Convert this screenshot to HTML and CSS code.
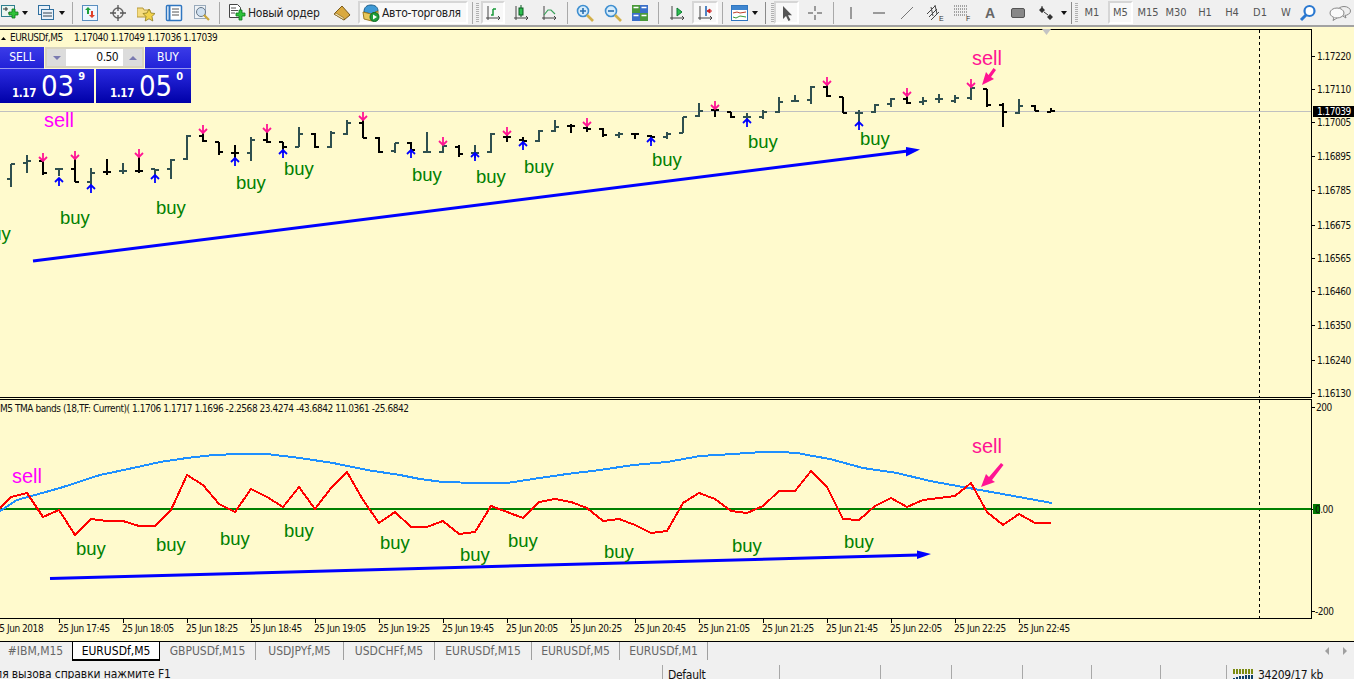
FILE: index.html
```
<!DOCTYPE html>
<html lang="ru">
<head>
<meta charset="utf-8">
<title>MetaTrader EURUSDf,M5</title>
<link rel="stylesheet" href="styles.css">
</head>
<body>
<div class="app">
  <header class="toolbar">
    <div class="tb w20"><svg class="ic" viewBox="0 0 18 18"><rect x=".5" y="1.5" width="13" height="11" fill="#eaf6f0" stroke="#2f7f8f"/><path d="M2 5h5M5 3v4M7 9h4" stroke="#333" fill="none"/><path class="plus" d="M8 8h3V5h3v3h3v3h-3v3h-3v-3H8z"/></svg></div>
    <div class="tb w10"><i class="caret"></i></div>
    <div class="sp6"></div>
    <div class="tb w20"><svg class="ic" viewBox="0 0 18 18"><rect x="1.5" y="1.5" width="11" height="9" fill="#e8f0f8" stroke="#2f6f9f"/><rect x="4.5" y="5.5" width="12" height="10" fill="#e8f0f8" stroke="#2f6f9f"/><path d="M6 9h9M6 12h9" stroke="#345" fill="none"/></svg></div>
    <div class="tb w12"><i class="caret"></i></div>
    <div class="sepbox w8"><i class="sep"></i></div>
    <div class="tb w28"><svg class="ic" viewBox="0 0 18 18"><rect x="1.5" y="1.5" width="15" height="15" fill="#eef6ff" stroke="#5a8fc0"/><path d="M7 3l3 3H8v4H6V6H4z" fill="#1fa03a"/><path d="M11 14l-3-3h2V7h2v4h2z" fill="#e0402a"/></svg></div>
    <div class="tb w28"><svg class="ic" viewBox="0 0 18 18"><circle cx="9" cy="9" r="5" fill="none" stroke="#666" stroke-width="1.4"/><path d="M9 1v6M9 11v6M1 9h6M11 9h6" stroke="#555" fill="none" stroke-width="1.3"/></svg></div>
    <div class="tb w28"><svg class="ic" viewBox="0 0 18 18"><path d="M0 4h6l1 2h6v7H0z" fill="#f5dc80" stroke="#b89a3a"/><path d="M12 5l2 4 4 .5-3 3 .8 4.500-3.800-2.200-3.800 2.200.8-4.500-3-3 4-.5z" fill="#f2d24a" stroke="#8a7a20" stroke-width=".8"/></svg></div>
    <div class="tb w28"><svg class="ic" viewBox="0 0 18 18"><rect x="1.500" y="1.500" width="15" height="15" rx="1" fill="#fff" stroke="#2f76c0" stroke-width="1.500"/><path d="M4.500 2v14" stroke="#2f76c0" stroke-width="2"/><path d="M7 5h7M7 8h7M7 11h7" stroke="#555" fill="none"/></svg></div>
    <div class="tb w28"><svg class="ic" viewBox="0 0 18 18"><rect x="1.500" y="1.500" width="11" height="13" fill="#eef2f6" stroke="#9ab"/><circle cx="8" cy="8" r="4.500" fill="#cfe0f0" stroke="#678"/><path d="M11 11l5 5" stroke="#c9a63a" stroke-width="2.200"/></svg></div>
    <div class="sepbox w6"><i class="sep"></i></div>
    <div class="tb order"><svg class="ic" viewBox="0 0 18 18"><path d="M1.500.5h8l3 3v10h-11z" fill="#fff" stroke="#444"/><path d="M3 4h5M3 6.500h7M3 9h4" stroke="#555" fill="none"/><path class="plus" d="M8 9h3V6h3v3h3v3h-3v4h-3v-4H8z"/></svg><span class="tb-label">Новый ордер</span></div>
    <div class="tb w24"><svg class="ic" viewBox="0 0 18 18"><path d="M1 10L9 2l8 9-6 5z" fill="#d9a93f" stroke="#7a5a1a"/><path d="M1 10l10 6v-2L3 9z" fill="#f4e3b0" stroke="#7a5a1a" stroke-width=".6"/></svg></div>
    <div class="sp4"></div>
    <div class="tb auto pressed"><svg class="ic" viewBox="0 0 18 18"><path d="M2 8c0-5 3-7 7-7s7 2 7 6l-7 3z" fill="#3f9ad6" stroke="#1c5e8a"/><path d="M1 8l8 2 7-3v7l-6 3-8-2z" fill="#e8c85a" stroke="#9a7a20"/><circle cx="12.500" cy="13" r="4.500" fill="#1f9d3a" stroke="#0f6a22"/><path d="M11 10.500l4 2.500-4 2.500z" fill="#fff"/></svg><span class="tb-label">Авто-торговля</span></div>
    <div class="sp2"></div>
    <div class="sepbox w5"><i class="sep"></i></div>
    <div class="gripbox w5"><i class="grip"></i></div>
    <div class="sp1"></div>
    <div class="tb w24 pressed"><svg class="ic16" viewBox="0 0 16 16"><path d="M3 1v12h12M1 13h2M3 13v2M13 11l2 2-2 2" class="axis"/><path d="M8 4h3M8 4v6H6" stroke="#1a9a3a" stroke-width="1.500" fill="none"/></svg></div>
    <div class="sp2"></div>
    <div class="tb w28"><svg class="ic16" viewBox="0 0 16 16"><path d="M3 1v12h12M1 13h2M3 13v2M13 11l2 2-2 2" class="axis"/><rect x="6" y="3" width="4" height="7" fill="#2fc050" stroke="#0a5a20"/><path d="M8 0v3M8 10v2" stroke="#0a5a20" fill="none"/></svg></div>
    <div class="tb w28"><svg class="ic16" viewBox="0 0 16 16"><path d="M3 1v12h12M1 13h2M3 13v2M13 11l2 2-2 2" class="axis"/><path d="M3 10l4-5 3 0 4 4" stroke="#3aa05a" stroke-width="1.200" fill="none"/></svg></div>
    <div class="sepbox w8"><i class="sep"></i></div>
    <div class="tb w28"><svg class="ic" viewBox="0 0 18 18"><circle cx="7" cy="7" r="5.500" fill="#d6ecfb" stroke="#3f8fd0" stroke-width="1.600"/><path d="M4 7h6M7 4v6" stroke="#2a70b0" stroke-width="1.600" fill="none"/><path d="M11 11l6 6" stroke="#d2b04a" stroke-width="2.600"/></svg></div>
    <div class="tb w28"><svg class="ic" viewBox="0 0 18 18"><circle cx="7" cy="7" r="5.500" fill="#d6ecfb" stroke="#3f8fd0" stroke-width="1.600"/><path d="M4 7h6" stroke="#2a70b0" stroke-width="1.600" fill="none"/><path d="M11 11l6 6" stroke="#d2b04a" stroke-width="2.600"/></svg></div>
    <div class="tb w26"><svg class="ic" viewBox="0 0 18 18"><rect x="1" y="1" width="8" height="8" fill="#4a9a3a"/><rect x="9" y="1" width="8" height="8" fill="#3a6fc8"/><rect x="1" y="9" width="8" height="8" fill="#3a6fc8"/><rect x="9" y="9" width="8" height="8" fill="#4a9a3a"/><path d="M2.500 3.500h5M10.500 3.500h5M2.500 11.500h5M10.500 11.500h5" stroke="#fff" fill="none" stroke-width="1.500"/></svg></div>
    <div class="sepbox w10"><i class="sep"></i></div>
    <div class="tb w28"><svg class="ic16" viewBox="0 0 16 16"><path d="M3 1v12h12M1 13h2M3 13v2M13 11l2 2-2 2" class="axis"/><path d="M8 3l5 4-5 4z" fill="#2fc050" stroke="#0a7a30"/></svg></div>
    <div class="sp1"></div>
    <div class="tb w26 pressed"><svg class="ic16" viewBox="0 0 16 16"><path d="M3 1v12h12M1 13h2M3 13v2M13 11l2 2-2 2" class="axis"/><path d="M9 1v10" stroke="#1a5fb0" stroke-width="1.500" fill="none"/><path d="M15 6h-3M10 6l3-2v4z" fill="#d02020" stroke="#d02020"/></svg></div>
    <div class="sepbox w8"><i class="sep"></i></div>
    <div class="sp4"></div>
    <div class="tb w20"><svg class="ic" viewBox="0 0 18 18"><rect x=".5" y="1.500" width="16" height="15" fill="#fff" stroke="#2f76c0"/><rect x="1" y="2" width="15" height="4" fill="#3f86d0"/><path d="M2 9l4-1 3 1 6-1" stroke="#c0402a" fill="none"/><path d="M2 13l3 1 4-2 6 1" stroke="#3a9a3a" fill="none"/></svg></div>
    <div class="tb w10"><i class="caret"></i></div>
    <div class="sepbox w10"><i class="sep dark"></i></div>
    <div class="gripbox w4"><i class="grip"></i></div>
    <div class="tb w25 pressed"><svg class="ic16" viewBox="0 0 16 16"><path d="M4 1v13l3-3 2.500 5 2-1-2.500-4.800H13z" fill="#555"/></svg></div>
    <div class="sp4"></div>
    <div class="tb w23"><svg class="ic16" viewBox="0 0 16 16"><path d="M8 1v5M8 10v5M1 8h5M10 8h5" stroke="#444" fill="none"/></svg></div>
    <div class="sepbox w14"><i class="sep"></i></div>
    <div class="tb w22"><svg class="ic16" viewBox="0 0 16 16"><path d="M8 2v12" stroke="#444" fill="none"/></svg></div>
    <div class="sp6"></div>
    <div class="tb w22"><svg class="ic16" viewBox="0 0 16 16"><path d="M2 8h12" stroke="#444" fill="none"/></svg></div>
    <div class="sp6"></div>
    <div class="tb w22"><svg class="ic16" viewBox="0 0 16 16"><path d="M2 14L14 2" stroke="#777" fill="none"/></svg></div>
    <div class="sp3"></div>
    <div class="tb w27"><svg class="ic" viewBox="0 0 18 18"><path d="M1 10l8-8M3 13l8-8M5 16l8-8M5 3l2 9M9 1l2 9" stroke="#444" fill="none"/><text class="mini" x="13" y="17">E</text></svg></div>
    <div class="sp2"></div>
    <div class="tb w26"><svg class="ic" viewBox="0 0 18 18"><path d="M0 2h14M0 5h14M0 8h14M0 11h14" stroke="#555" stroke-dasharray="1 1" fill="none"/><text class="mini" x="12" y="17">F</text></svg></div>
    <div class="sp2"></div>
    <div class="tb w24 letter">A</div>
    <div class="sp4"></div>
    <div class="tb w24"><svg class="ic16" viewBox="0 0 16 16"><rect x="1.500" y="3.500" width="13" height="9" rx="1.500" fill="#888" stroke="#555"/></svg></div>
    <div class="sp4"></div>
    <div class="tb w26"><svg class="ic" viewBox="0 0 18 18"><path d="M1 6l3-3 3 3-3 3zM9 13l3-3 3 3-3 3z" fill="#333"/><path d="M4 2v2M6 8l4 3" stroke="#333" fill="none"/></svg></div>
    <div class="tb w7"><i class="caret"></i></div>
    <div class="sepbox w8"><i class="sep dark"></i></div>
    <div class="gripbox w3"><i class="grip"></i></div>
    <div class="tb w28 per">M1</div>
    <div class="sp2"></div>
    <div class="tb w25 per pressed">M5</div>
    <div class="sp1"></div>
    <div class="tb w28 per">M15</div>
    <div class="tb w28 per">M30</div>
    <div class="sp1"></div>
    <div class="tb w28 per">H1</div>
    <div class="tb w26 per">H4</div>
    <div class="sp1"></div>
    <div class="tb w28 per">D1</div>
    <div class="tb w24 per">W</div>
    <div class="tb w20"><svg class="ic" viewBox="0 0 18 18"><circle cx="10.500" cy="7" r="5" fill="#fff" stroke="#2a78d0" stroke-width="2.200"/><path d="M7 11l-5 5" stroke="#2a78d0" stroke-width="3"/></svg></div>
    <div class="sp8"></div>
    <div class="tb w28"><svg class="chat" viewBox="0 0 22 16"><ellipse cx="15" cy="6" rx="6.500" ry="4.500" fill="#eee" stroke="#888"/><path d="M16 10l1 3-4-2.500" fill="#eee" stroke="#888"/><ellipse cx="8" cy="8" rx="7" ry="5" fill="#fafafa" stroke="#888"/><path d="M5 12.500l-1 3 4-2.500" fill="#fafafa" stroke="#888"/></svg></div>
  </header>

  <main class="chart">
    <svg class="pane pane-main" viewBox="0 27 1354 371">
      <defs>
        <path id="dn" d="M0 0V-8M-4 -4L0 0L4 -4"/>
        <path id="up" d="M0 0V8M-4 4L0 0L4 4"/>
      </defs>
      <path class="axisline" d="M0 29.500H1311.500V397.500H0"/>
      <path class="last" d="M0 111H1311"/>
      <path class="vdash" d="M1259.500 30V397"/>
      <path class="marker" d="M1042 29H1051L1046.500 35z"/>
      <path class="bars slate" d="M11 164V187M7 179H11M11 164H15M27 155V173M23 163H27M27 161H31M59 168V176M55 169H59M59 169H63M91 168V185M87 182H91M91 173H95M123 163V174M119 171H123M123 171H127M155 169V177M151 169H155M155 170H159M171 159V179M167 169H171M171 160H175M187 135V160M183 159H187M187 136H191M251 137V161M247 153H251M251 140H255M299 127V147M295 147H299M299 134H303M331 131V148M327 147H331M331 133H335M347 120V135M343 134H347M347 123H351M395 143V153M391 151H395M395 143H399M427 132V153M423 152H427M427 152H431M443 143V153M439 152H443M443 146H447M475 145V158M471 153H475M475 153H479M491 133V153M487 152H491M491 134H495M539 130V142M535 141H539M539 131H543M555 120V132M551 131H555M555 127H559M619 132V138M615 135H619M619 134H623M667 132V139M663 137H667M667 134H671M683 117V133M679 133H683M683 117H687M699 103V117M695 116H699M699 111H703M747 113V122M743 117H747M747 117H751M763 110V119M759 117H763M763 112H767M779 97V113M775 112H779M779 102H783M795 95V102M791 101H795M795 101H799M811 86V104M807 100H811M811 87H815M859 110V123M855 113H859M859 113H863M875 104V113M871 112H875M875 105H879M891 98V107M887 104H891M891 99H895M923 97V105M919 102H923M923 101H927M939 94V103M935 99H939M939 99H943M955 95V103M951 101H955M955 98H959M971 87V100M967 98H971M971 88H975M1019 99V114M1015 113H1019M1019 106H1023"/>
      <path class="bars black" d="M43 161V175M39 161H43M43 173H47M75 159V182M71 169H75M75 182H79M107 159V175M103 172H107M107 172H111M139 155V173M135 171H139M139 171H143M203 132V142M199 136H203M203 141H207M219 142V155M215 142H219M219 152H223M235 145V158M231 153H235M235 153H239M267 130V143M263 140H267M267 142H271M283 142V153M279 142H283M283 147H287M315 133V148M311 134H315M315 147H319M363 120V138M359 123H363M363 138H367M379 137V153M375 138H379M379 152H383M411 142V150M407 143H411M411 150H415M459 145V157M455 147H459M459 154H463M507 133V142M503 137H507M507 137H511M523 137V143M519 140H523M523 141H527M571 124V133M567 126H571M571 126H575M587 125V132M583 128H587M587 129H591M603 128V137M599 129H603M603 135H607M635 133V139M631 134H635M635 134H639M651 135V142M647 136H651M651 137H655M715 107V117M711 110H715M715 110H719M731 112V118M727 112H731M731 117H735M827 85V97M823 87H827M827 96H831M843 97V113M839 97H843M843 113H847M907 93V104M903 99H907M907 103H911M987 89V107M983 89H987M987 105H991M1003 103V127M999 105H1003M1003 112H1007M1035 105V111M1031 106H1035M1035 111H1039M1051 108V112M1047 112H1051M1051 111H1055"/>
      <g class="arr pink">
        <use href="#dn" x="43" y="161"/><use href="#dn" x="75" y="159"/><use href="#dn" x="139" y="157"/><use href="#dn" x="203" y="133"/><use href="#dn" x="267" y="132"/><use href="#dn" x="363" y="120"/><use href="#dn" x="443" y="145"/><use href="#dn" x="507" y="135"/><use href="#dn" x="587" y="126"/><use href="#dn" x="715" y="109"/><use href="#dn" x="827" y="85"/><use href="#dn" x="907" y="96"/><use href="#dn" x="971" y="87"/>
      </g>
      <g class="arr blue">
        <use href="#up" x="59" y="178"/><use href="#up" x="91" y="185"/><use href="#up" x="155" y="175"/><use href="#up" x="235" y="158"/><use href="#up" x="283" y="150"/><use href="#up" x="411" y="150"/><use href="#up" x="475" y="153"/><use href="#up" x="523" y="142"/><use href="#up" x="651" y="138"/><use href="#up" x="747" y="119"/><use href="#up" x="859" y="122"/>
      </g>
      <path class="trend" d="M33 261L908 151"/><path class="head" d="M920 149.500L906 156.500V147z"/>
      <path class="pink-arrow" d="M982 85L986 72L988.500 75L993.500 68L996 70L991 77L994 79z"/>
      <text class="lbl magenta" x="44" y="127">sell</text>
      <text class="lbl pinktxt" x="972" y="65">sell</text>
      <text class="lbl buy" x="-19" y="240">buy</text><text class="lbl buy" x="60" y="224">buy</text><text class="lbl buy" x="156" y="214">buy</text><text class="lbl buy" x="236" y="189">buy</text><text class="lbl buy" x="284" y="175">buy</text><text class="lbl buy" x="412" y="181">buy</text><text class="lbl buy" x="476" y="183">buy</text><text class="lbl buy" x="524" y="173">buy</text><text class="lbl buy" x="652" y="166">buy</text><text class="lbl buy" x="748" y="148">buy</text><text class="lbl buy" x="860" y="145">buy</text>
      <path class="tick" d="M1311 56H1315M1311 89H1315M1311 122H1315M1311 156H1315M1311 190H1315M1311 225H1315M1311 258H1315M1311 291H1315M1311 325H1315M1311 360H1315M1311 393H1315"/>
      <g class="scale">
        <text x="1317" y="60">1.17220</text><text x="1317" y="93">1.17110</text><text x="1317" y="126">1.17005</text><text x="1317" y="160">1.16895</text><text x="1317" y="194">1.16785</text><text x="1317" y="229">1.16675</text><text x="1317" y="262">1.16565</text><text x="1317" y="295">1.16460</text><text x="1317" y="329">1.16350</text><text x="1317" y="364">1.16240</text><text x="1317" y="397">1.16130</text>
      </g>
      <rect class="price-box" x="1313" y="106" width="41" height="11"/>
      <text class="scale-w" x="1317" y="115">1.17039</text>
      <path class="hdr-tri" d="M1 40L3.500 37L6 40z"/>
      <text class="hdr" x="10" y="41">EURUSDf,M5</text>
      <text class="hdr" x="74" y="41">1.17040 1.17049 1.17036 1.17039</text>
    </svg>

    <svg class="pane pane-sub" viewBox="0 398 1354 221">
      <path class="axisline" d="M0 399.500H1311.500V618.500H0"/>
      <path class="vdash" d="M1259.500 400V618"/>
      <path class="green" d="M0 509H1311"/>
      <polyline class="ind sky" points="0,511 17,500 60,488 100,475 133,468 160,462 187,458 213,455 240,454 267,454 300,458 333,463 367,470 400,475 420,479 443,482 477,483 507,483 533,479 567,474 600,470 633,465 667,462 700,456 733,454 763,452 780,452 797,453 813,456 830,459 863,468 897,473 930,481 963,487 997,493 1030,499 1052,503"/>
      <polyline class="ind red" points="-5,513 11,497 27,493 43,517 59,510 75,535 91,519 107,521 123,521 139,526 155,526 171,510 187,475 203,485 219,504 235,512 251,489 267,497 283,507 299,487 315,509 331,488 347,472 363,500 379,523 395,512 411,527 427,527 443,521 459,534 475,532 491,506 507,512 523,518 539,502 555,499 571,502 587,508 603,521 619,519 635,525 651,533 667,531 683,503 699,493 715,499 731,511 747,513 763,506 779,491 795,491 811,471 827,487 843,519 859,520 875,506 891,498 907,507 923,500 939,498 955,496 971,483 987,512 1003,525 1019,514 1035,523 1051,523"/>
      <path class="trend" d="M50 578.500L918 555"/><path class="head" d="M931 554L917 559V550.500z"/>
      <path class="pink-arrow" d="M981 487L986 474L989 477L1001 463L1003.500 465L992 480L995 482z"/>
      <text class="lbl magenta" x="12" y="483">sell</text>
      <text class="lbl pinktxt" x="972" y="453">sell</text>
      <text class="lbl buy" x="76" y="555">buy</text><text class="lbl buy" x="156" y="551">buy</text><text class="lbl buy" x="220" y="545">buy</text><text class="lbl buy" x="284" y="537">buy</text><text class="lbl buy" x="380" y="549">buy</text><text class="lbl buy" x="460" y="561">buy</text><text class="lbl buy" x="508" y="547">buy</text><text class="lbl buy" x="604" y="558">buy</text><text class="lbl buy" x="732" y="552">buy</text><text class="lbl buy" x="844" y="548">buy</text>
      <path class="tick" d="M1311 407H1315M1311 509H1315M1311 611H1315"/>
      <rect class="zero-box" x="1313" y="504" width="7" height="10"/>
      <g class="scale">
        <text x="1316" y="411">200</text><text x="1315" y="513">0.00</text><text x="1315" y="615">-200</text>
      </g>
      <text class="hdr" x="0" y="412">M5 TMA bands (18,TF: Current)( 1.1706 1.1717 1.1696 -2.2568 23.4274 -43.6842 11.0361 -25.6842</text>
    </svg>

    <div class="timeaxis">
      <span class="t">25 Jun 2018</span><span class="t">25 Jun 17:45</span><span class="t">25 Jun 18:05</span><span class="t">25 Jun 18:25</span><span class="t">25 Jun 18:45</span><span class="t">25 Jun 19:05</span><span class="t">25 Jun 19:25</span><span class="t">25 Jun 19:45</span><span class="t">25 Jun 20:05</span><span class="t">25 Jun 20:25</span><span class="t">25 Jun 20:45</span><span class="t">25 Jun 21:05</span><span class="t">25 Jun 21:25</span><span class="t">25 Jun 21:45</span><span class="t">25 Jun 22:05</span><span class="t">25 Jun 22:25</span><span class="t">25 Jun 22:45</span>
    </div>

    <div class="trade">
      <div class="trade-top">
        <div class="side">SELL</div>
        <div class="spinner">
          <span class="spin"><i class="tri down"></i></span>
          <span class="lot">0.50</span>
          <span class="spin"><i class="tri upw"></i></span>
        </div>
        <div class="side buyside">BUY</div>
      </div>
      <div class="trade-bottom">
        <div class="quote"><span class="q-s">1.17</span><span class="q-b">03</span><span class="q-x">9</span></div>
        <div class="quote"><span class="q-s">1.17</span><span class="q-b">05</span><span class="q-x">0</span></div>
      </div>
    </div>
  </main>

  <nav class="tabs">
    <span class="tab">#IBM,M15</span>
    <span class="tab active">EURUSDf,M5</span>
    <span class="tab">GBPUSDf,M15</span>
    <span class="tab div">USDJPYf,M5</span>
    <span class="tab div">USDCHFf,M5</span>
    <span class="tab div">EURUSDf,M15</span>
    <span class="tab div">EURUSDf,M5</span>
    <span class="tab div">EURUSDf,M1</span>
    <span class="tab-fill"><i class="nav-l"></i><i class="nav-r"></i></span>
  </nav>

  <footer class="status">
    <span class="cell first">Для вызова справки нажмите F1</span>
    <span class="cell">Default</span>
    <span class="cell"></span>
    <span class="cell"></span>
    <span class="cell"></span>
    <span class="cell"></span>
    <span class="cell"></span>
    <span class="cell"></span>
    <span class="cell conn"><svg class="connbars" viewBox="0 0 23 13"><path d="M1 0h2v5H1zM4 0h2v5H4zM7 0h2v5H7zM10 0h2v5h-2zM13 0h2v5h-2zM16 0h2v5h-2zM19 0h2v5h-2z" fill="#7a8a10"/><path d="M1 9h2v4H1zM4 8h2v5H4zM7 7h2v6H7zM10 7h2v6h-2zM13 6h2v7h-2zM16 6h2v7h-2zM19 6h2v7h-2z" fill="#0f3f6a"/></svg>34209/17 kb</span>
  </footer>
</div>
</body>
</html>
```
FILE: styles.css
```
* { box-sizing: border-box; }
html, body { margin: 0; padding: 0; overflow: hidden; }
body {
  width: 1354px;
  height: 679px;
  background: #f0f0f0;
  font-family: "DejaVu Sans", "Liberation Sans", sans-serif;
  font-stretch: condensed;
  color: #111;
}
.app { display: flex; flex-direction: column; width: 1354px; height: 679px; overflow: hidden; }

/* toolbar */
.toolbar {
  display: flex;
  align-items: center;
  flex: none;
  height: 27px;
  padding: 1px 0;
  background: #f0f0f0;
  border-bottom: 2px solid #a2a2a2;
  overflow: hidden;
}
.tb {
  display: flex;
  align-items: center;
  justify-content: center;
  flex: none;
  height: 23px;
  font-size: 12px;
  color: #222;
}
.w3 { width: 3px; } .w4 { width: 4px; } .w5 { width: 5px; } .w6 { width: 6px; } .w7 { width: 7px; } .w8 { width: 8px; }
.w10 { width: 10px; } .w12 { width: 12px; } .w14 { width: 14px; } .w20 { width: 20px; } .w22 { width: 22px; }
.w23 { width: 23px; } .w24 { width: 24px; } .w25 { width: 25px; } .w26 { width: 26px; } .w27 { width: 27px; } .w28 { width: 28px; }
.sp1 { width: 1px; flex: none; } .sp2 { width: 2px; flex: none; } .sp3 { width: 3px; flex: none; }
.sp4 { width: 4px; flex: none; } .sp6 { width: 6px; flex: none; } .sp8 { width: 8px; flex: none; }
.ic { width: 18px; height: 18px; display: block; }
.ic16 { width: 16px; height: 16px; display: block; }
.chat { width: 22px; height: 16px; display: block; }
.plus { fill: #2fc23a; stroke: #0b7a1a; stroke-width: .8; }
.axis { fill: none; stroke: #444; stroke-width: 1; }
.mini { font-size: 7px; fill: #333; font-family: "Liberation Sans", sans-serif; }
.caret { display: block; width: 0; height: 0; border: 3.5px solid transparent; border-top: 4px solid #111; border-bottom: 0; }
.sepbox, .gripbox { display: flex; justify-content: center; align-items: center; flex: none; height: 23px; }
.sep { display: block; width: 1px; height: 22px; background: #a9a9a9; }
.sep.dark { background: #8a8a8a; }
.grip { display: block; width: 3px; height: 20px; background: repeating-linear-gradient(#b0b0b0 0 1px, transparent 1px 2px); }
.order { width: 108px; justify-content: flex-start; padding-left: 6px; gap: 2px; }
.tb-label { white-space: nowrap; font-size: 12px; letter-spacing: -.27px; }
.auto { width: 110px; justify-content: flex-start; padding-left: 2px; gap: 2px; }
.pressed {
  background: #f8f8f8;
  border: 2px solid #d6d6d6;
  border-right-color: #fff;
  border-bottom-color: #fff;
}
.per { font-size: 11px; color: #555; }
.letter { font-family: "Liberation Sans", sans-serif; font-size: 14px; color: #666; font-weight: bold; }

/* chart */
.chart { position: relative; flex: none; height: 614px; background: #fffacd; }
.pane { display: block; width: 1354px; }
.pane-main { height: 371px; }
.pane-sub { height: 221px; }
.axisline { fill: none; stroke: #000; stroke-width: 1; shape-rendering: crispEdges; }
.last { stroke: #c0c0c0; stroke-width: 1; shape-rendering: crispEdges; fill: none; }
.vdash { stroke: #000; stroke-width: 1; stroke-dasharray: 3 3; fill: none; shape-rendering: crispEdges; }
.marker { fill: #c4c4c4; }
.bars { fill: none; stroke-width: 2; shape-rendering: crispEdges; }
.slate { stroke: #2f4f4f; }
.black { stroke: #000; }
.arr { fill: none; stroke-width: 1.8; }
.pink { stroke: #ff1493; }
.blue { stroke: #0000ff; }
.trend { stroke: #0000ff; stroke-width: 3; fill: none; }
.head { fill: #0000ff; }
.pink-arrow { fill: #ff1493; }
.lbl { font-family: "Liberation Sans", sans-serif; font-size: 18.500px; font-stretch: normal; }
.buy { fill: #008000; }
.magenta { fill: #ff00ff; font-size: 20px; }
.pinktxt { fill: #ff1493; font-size: 20px; }
.tick { stroke: #000; fill: none; shape-rendering: crispEdges; }
.scale text { font-size: 10px; letter-spacing: -.5px; fill: #111; }
.scale-w { font-size: 10px; letter-spacing: -.5px; fill: #fff; }
.price-box { fill: #000; }
.zero-box { fill: #007a00; }
.hdr { font-size: 10px; letter-spacing: -.45px; fill: #111; }
.hdr-tri { fill: #000; }
.green { stroke: #008000; stroke-width: 2; fill: none; shape-rendering: crispEdges; }
.ind { fill: none; stroke-width: 2; stroke-linejoin: round; shape-rendering: crispEdges; }
.sky { stroke: #1e90ff; }
.red { stroke: #ff0000; }

.timeaxis { display: flex; height: 22px; margin-left: -6px; overflow: visible; }
.t {
  flex: none;
  width: 64px;
  font-size: 10px;
  letter-spacing: -.45px;
  line-height: 12px;
  white-space: nowrap;
}
.t::before { content: ""; display: block; width: 1px; height: 4px; margin-left: 1px; background: #000; }

/* one click trading (lies over the chart) */
.trade { position: absolute; left: 0; top: 20px; width: 191px; color: #fff; }
.trade-top { display: flex; height: 22px; }
.side {
  width: 44px;
  background: linear-gradient(#3b3be8, #2222d8);
  border-bottom: 1px solid #9a9af0;
  font-size: 12px;
  text-align: center;
  line-height: 21px;
}
.buyside { width: 46px; margin-left: 1px; }
.spinner {
  display: flex;
  width: 99px;
  height: 21px;
  margin-left: 1px;
  background: #fff;
  border: 2px solid #d8d4c0;
  color: #111;
}
.spin { display: flex; align-items: center; justify-content: center; width: 19px; background: #dcdcdc; flex: none; }
.lot { flex: 1; text-align: right; font-size: 12px; letter-spacing: -.6px; line-height: 17px; padding-right: 5px; }
.tri { display: block; width: 0; height: 0; border: 4px solid transparent; }
.tri.down { border-top: 4px solid #7a7ab0; border-bottom: 0; }
.tri.upw { border-bottom: 4px solid #7a7ab0; border-top: 0; }
.trade-bottom { display: flex; gap: 2px; height: 34px; }
.quote {
  display: flex;
  align-items: flex-start;
  width: 94px;
  padding-left: 12px;
  background: linear-gradient(#2a2ae0, #0000a8);
  overflow: hidden;
}
.quote + .quote { width: 95px; padding-left: 14px; }
.q-s { font-size: 11.500px; font-weight: bold; letter-spacing: -.4px; margin-top: 17px; }
.q-b { font-size: 29px; line-height: 34px; margin-left: 5px; }
.q-x { font-size: 11px; margin-left: 4px; margin-top: 1px; font-weight: bold; }

/* tabs */
.tabs {
  display: grid;
  grid-template-columns: 72px 88px 96px 88px 91px 97px 88px 88px 1fr;
  flex: none;
  height: 21px;
  background: #f0f0f0;
  border-top: 1px solid #000;
  font-size: 12px;
  color: #666;
}
.tab { display: flex; align-items: center; justify-content: center; height: 18px; white-space: nowrap; border-right: 1px solid transparent; }
.tab.div, .tab:nth-child(3) { border-right: 1px solid #a0a0a0; }
.tab.active { background: #fff; color: #000; border: 1px solid #000; border-top: 0; border-bottom-width: 2px; height: 19px; }
.tab-fill { display: flex; align-items: center; justify-content: flex-end; gap: 14px; padding-right: 7px; height: 18px; }
.nav-l, .nav-r { display: block; width: 0; height: 0; border: 4px solid transparent; }
.nav-l { border-right: 4px solid #a0a0a0; border-left: 0; }
.nav-r { border-left: 4px solid #a0a0a0; border-right: 0; }

/* status bar */
.status {
  display: grid;
  grid-template-columns: 662px 117px 101px 71px 71px 69px 69px 66px 128px;
  flex: none;
  height: 17px;
  background: #f0f0f0;
  font-size: 12px;
  letter-spacing: -.3px;
  color: #111;
  overflow: hidden;
}
.cell { display: flex; align-items: flex-end; padding-left: 5px; border-left: 1px solid #a8a8a8; margin-top: 3px; white-space: nowrap; line-height: 14px; height: 17px; }
.cell.first { display: block; border-left: 0; padding: 2px 0 0; text-indent: -13px; letter-spacing: -.1px; overflow: hidden; }
.conn { gap: 3px; }
.connbars { width: 23px; height: 13px; display: block; flex: none; }
```
